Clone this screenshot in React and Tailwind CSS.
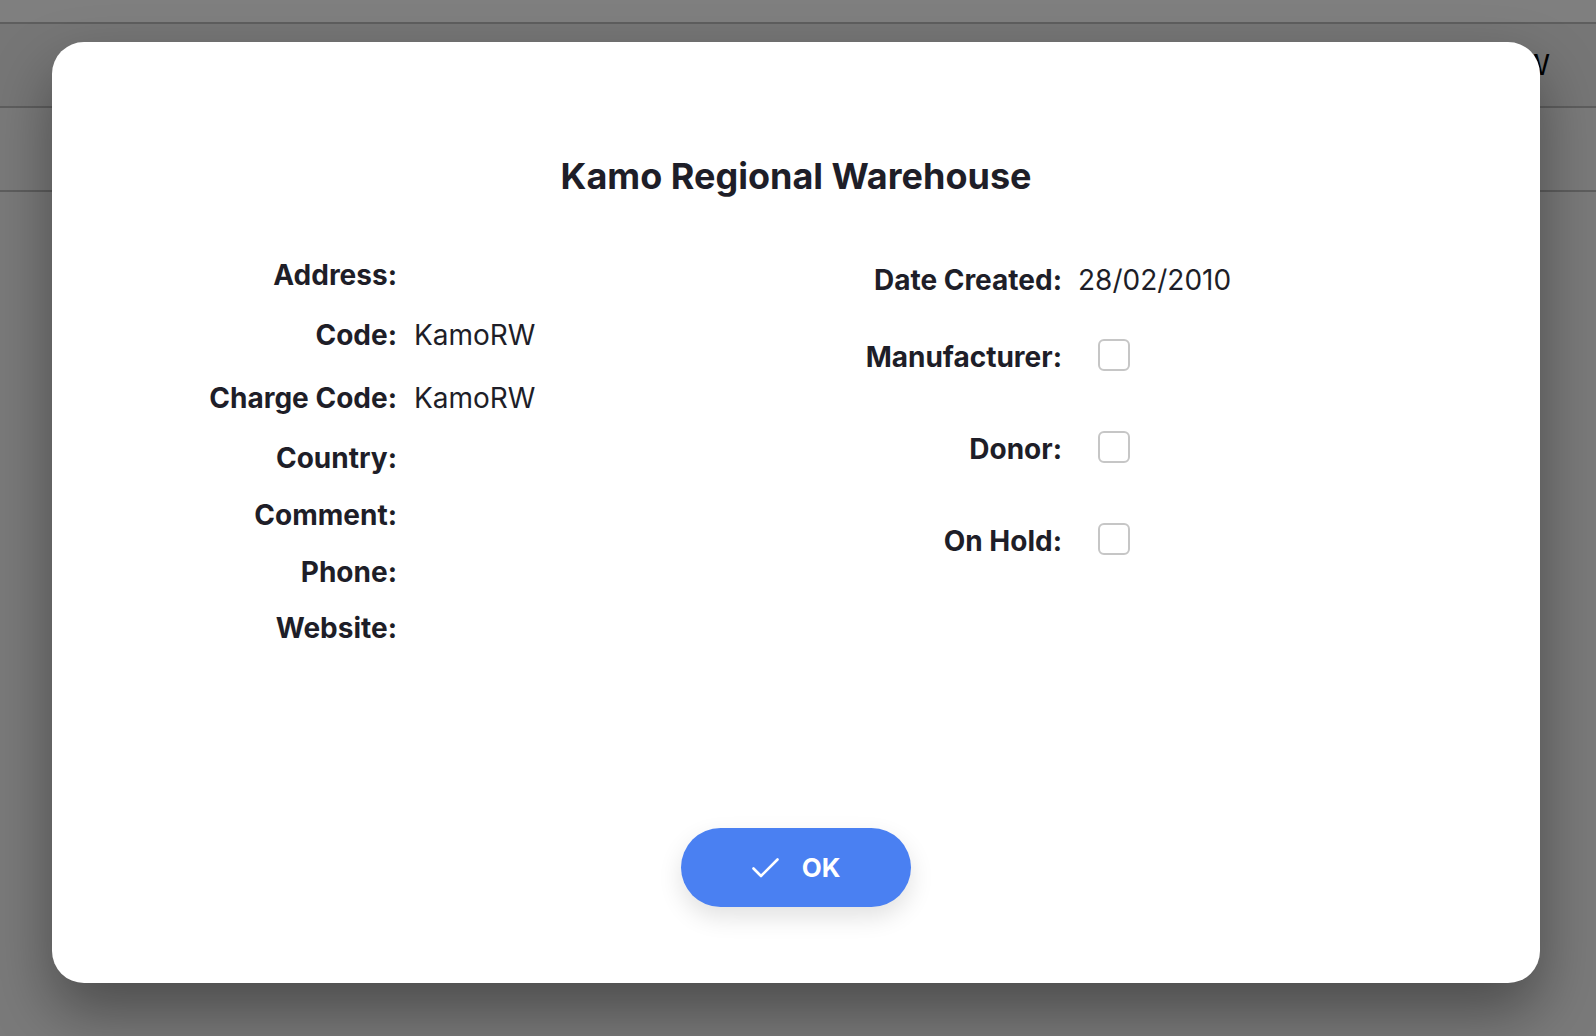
import React from "react";

const leftRows = [
  { label: "Address:", value: "", h: "h-[58px]" },
  { label: "Code:", value: "KamoRW", h: "h-[62px]" },
  { label: "Charge Code:", value: "KamoRW", h: "h-[64px]" },
  { label: "Country:", value: "", h: "h-[56px]" },
  { label: "Comment:", value: "", h: "h-[58px]" },
  { label: "Phone:", value: "", h: "h-[56px]" },
  { label: "Website:", value: "", h: "h-[56px]" },
];

function Checkbox() {
  return (
    <div className="ml-[36px] mb-[5px] h-[32px] w-[32px] rounded-[6px] border-2 border-[#c6c6c6] bg-white" />
  );
}

export default function App() {
  return (
    <div
      className="relative h-[1036px] w-[1596px] overflow-hidden bg-white"
      style={{ fontFamily: "Inter, 'Noto Sans', sans-serif" }}
    >
      {/* underlying page */}
      <div className="flex h-full flex-col">
        <div className="h-[24px] border-b-2 border-[#bcbcbc] bg-white" />
        <div className="flex h-[84px] items-center justify-end border-b-2 border-[#bcbcbc] bg-[#ededed] pr-[46px]">
          <span className="text-[29px] text-black">KamoRW</span>
        </div>
        <div className="h-[84px] border-b-2 border-[#bcbcbc] bg-[#f4f4f4]" />
        <div className="flex-1 bg-[#f4f4f4]" />
      </div>

      {/* overlay */}
      <div className="absolute inset-0 bg-black/50" />

      {/* modal */}
      <div className="absolute left-[52px] top-[42px] flex h-[941px] w-[1488px] flex-col rounded-[32px] bg-white shadow-[0_28px_60px_rgba(0,0,0,0.38)] text-[#1e1e28]">
        <h1 className="mt-[112px] text-center text-[36px] font-bold leading-[44px]">
          Kamo Regional Warehouse
        </h1>

        <div className="mt-[48px] flex pl-[105px]">
          <div className="flex w-[665px] flex-col">
            {leftRows.map((r) => (
              <div key={r.label} className={`flex items-center ${r.h}`}>
                <div className="w-[240px] text-right text-[28px] font-bold leading-[34px]">
                  {r.label}
                </div>
                <div className="ml-[17px] text-[28px] leading-[34px]">{r.value}</div>
              </div>
            ))}
          </div>
          <div className="flex flex-col pt-[2px]">
            <div className="flex h-[63px] items-center">
              <div className="w-[240px] text-right text-[28px] font-bold leading-[34px]">
                Date Created:
              </div>
              <div className="ml-[16px] text-[28px] leading-[34px]">28/02/2010</div>
            </div>
            {["Manufacturer:", "Donor:", "On Hold:"].map((l) => (
              <div key={l} className="flex h-[92px] items-center">
                <div className="w-[240px] text-right text-[28px] font-bold leading-[34px]">
                  {l}
                </div>
                <Checkbox />
              </div>
            ))}
          </div>
        </div>

        <div className="flex-1" />

        <div className="mb-[76px] flex justify-center">
          <button className="flex h-[79px] w-[230px] items-center justify-center gap-[23px] rounded-full bg-[#4a80f2] text-white shadow-[0_10px_24px_rgba(0,0,0,0.12)]">
            <svg width="27" height="20" viewBox="0 0 27 20" fill="none">
              <path d="M1.5 10.5 L9 18 L25.5 1.5" stroke="white" strokeWidth="2.6" strokeLinecap="round" strokeLinejoin="round" />
            </svg>
            <span className="text-[26px] font-bold leading-none">OK</span>
          </button>
        </div>
      </div>
    </div>
  );
}
